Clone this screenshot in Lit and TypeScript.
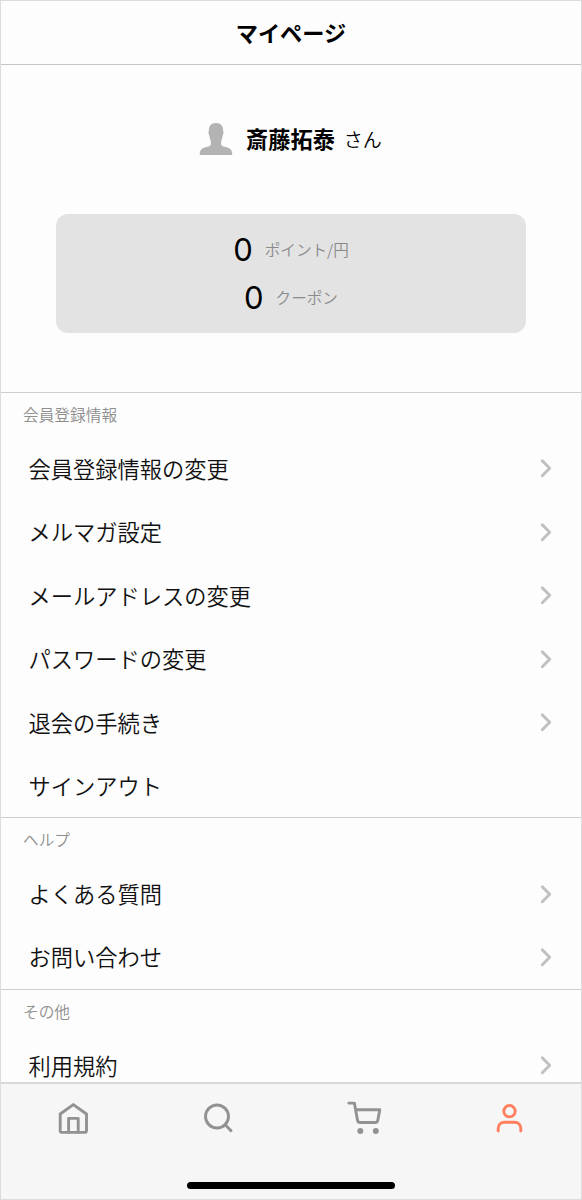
import { LitElement, html, css, svg } from "lit";
import { customElement, property } from "lit/decorators.js";

interface Section {
  title: string;
  items: { label: string; link: boolean }[];
}

const item = (label: string, link = true) => ({ label, link });

const SECTIONS: Section[] = [
  {
    title: "会員登録情報",
    items: [
      item("会員登録情報の変更"),
      item("メルマガ設定"),
      item("メールアドレスの変更"),
      item("パスワードの変更"),
      item("退会の手続き"),
      item("サインアウト", false),
    ],
  },
  { title: "ヘルプ", items: [item("よくある質問"), item("お問い合わせ")] },
  { title: "その他", items: [item("利用規約")] },
];

const ICONS: Record<string, unknown> = {
  home: svg`<path d="M6.200 14 19.300 4.600l13.200 9.400v16.400a2 2 0 0 1-2 2H8.200a2 2 0 0 1-2-2z"/><path d="M14.600 32.400V18.400h9.600v14"/>`,
  search: svg`<circle cx="18" cy="16.500" r="11.500"/><path d="m26.400 24.900 5.600 5.900"/>`,
  cart: svg`<path d="M4.800 3.100h5.600l3.100 17.200a2.600 2.600 0 0 0 2.600 2.200h15.200a2.600 2.600 0 0 0 2.500-2.200l2-10.600H11.700"/><g fill="currentColor" stroke="none"><circle cx="16.300" cy="31" r="3"/><circle cx="31.800" cy="31" r="3"/></g>`,
  user: svg`<circle cx="20.500" cy="11.200" r="5.700"/><path d="M9.200 31v-2.700a6 6 0 0 1 6-6h10.600a6 6 0 0 1 6 6V31"/>`,
};

@customElement("menu-section")
export class MenuSection extends LitElement {
  @property({ attribute: false }) section!: Section;

  static styles = css`
    :host {
      display: block;
      border-top: 1px solid #cfcfcf;
    }
    .title {
      height: 43.75px;
      line-height: 43.75px;
      padding-left: 22px;
      font-size: 15.7px;
      color: #8e8e8e;
    }
    .row {
      display: flex;
      align-items: center;
      justify-content: space-between;
      height: 63.4px;
      padding: 0 28px 0 27.5px;
      font-size: 22.25px;
      line-height: 24px;
      color: #111;
      white-space: nowrap;
    }
    .label {
      padding-bottom: 1px;
    }
    .chevron {
      width: 14px;
      height: 20px;
      fill: none;
      stroke: #c0c0c0;
      stroke-width: 2.9;
      stroke-linecap: round;
      stroke-linejoin: round;
    }
  `;

  render() {
    return html`
      <div class="title">${this.section.title}</div>
      ${this.section.items.map(
        (entry) => html`<div class="row">
          <span class="label">${entry.label}</span>
          ${entry.link
            ? html`<svg class="chevron" viewBox="0 0 14 20"><path d="m3.300 2.900 7.400 7.400-7.400 7.400" /></svg>`
            : null}
        </div>`
      )}
    `;
  }
}

@customElement("app-root")
export class AppRoot extends LitElement {
  static styles = css`
    :host {
      display: flex;
      flex-direction: column;
      box-sizing: border-box;
      width: 100%;
      height: 1200px;
      border: 1px solid #dcdcdc;
      background: #fdfdfd;
      font-family: "Noto Sans CJK JP", sans-serif;
      font-weight: 350;
      color: #000;
      overflow: hidden;
    }
    .header {
      flex: none;
      height: 63px;
      line-height: 62px;
      border-bottom: 1px solid #c6c6c6;
      text-align: center;
      font-size: 22.2px;
      font-weight: 700;
    }
    .content {
      flex: 1;
      min-height: 0;
      overflow: hidden;
    }
    .profile {
      display: flex;
      align-items: center;
      justify-content: center;
      height: 148.5px;
      white-space: nowrap;
    }
    .avatar {
      width: 34px;
      height: 34px;
      margin-right: 13px;
      fill: #b3b3b3;
    }
    .name {
      font-size: 22.2px;
      font-weight: 700;
      margin-right: 9px;
      padding-bottom: 3px;
    }
    .suffix {
      font-size: 19px;
      padding: 0 1px 2px 0;
    }
    .card {
      box-sizing: border-box;
      height: 119.5px;
      margin: 0 55px 59px;
      padding: 12px 0;
      border-radius: 12px;
      background: #e3e3e3;
    }
    .stat {
      display: flex;
      align-items: center;
      justify-content: center;
      height: 48px;
    }
    .value {
      font: 400 31px/48px Inter, sans-serif;
      margin-right: 12px;
    }
    .unit {
      font-size: 15.6px;
      padding-bottom: 1px;
      color: #8a8a8a;
    }
    .tabbar {
      flex: none;
      display: flex;
      flex-direction: column;
      justify-content: space-between;
      align-items: center;
      height: 115px;
      border-top: 2px solid #d8d8d8;
      background: #f6f6f6;
    }
    .tabs {
      display: flex;
      align-self: stretch;
      padding-top: 16px;
    }
    .tab {
      flex: 1;
      display: flex;
      justify-content: center;
      color: #929292;
    }
    .tab.active {
      color: #ff7f5f;
    }
    .icon {
      width: 40px;
      height: 40px;
      fill: none;
      stroke: currentColor;
      stroke-width: 2.9;
      stroke-linecap: round;
      stroke-linejoin: round;
    }
    .indicator {
      width: 208px;
      height: 7px;
      margin-bottom: 10px;
      border-radius: 4px;
      background: #000;
    }
  `;

  render() {
    return html`
      <div class="header">マイページ</div>
      <div class="content">
        <div class="profile">
          <svg class="avatar" viewBox="0 0 34 34">
            <path
              d="M17 1c5 0 7.400 3.200 7.100 8 .8.500.5 3.300-.4 4.300-.3 2.400-.8 4.200-1.500 5.500v3.600c.3 1.800 2.200 2.100 5.300 2.900 4.300 1.200 5.700 3 5.800 7.700H.7c.1-4.700 1.500-6.500 5.800-7.700 3.100-.8 5-1.100 5.300-2.900v-3.600c-.7-1.300-1.200-3.100-1.500-5.500-.9-1-1.200-3.800-.4-4.300C9.600 4.200 12 1 17 1z"
            />
          </svg>
          <span class="name">斎藤拓泰</span><span class="suffix">さん</span>
        </div>
        <div class="card">
          <div class="stat"><span class="value">0</span><span class="unit">ポイント/円</span></div>
          <div class="stat"><span class="value">0</span><span class="unit">クーポン</span></div>
        </div>
        ${SECTIONS.map((s) => html`<menu-section .section=${s}></menu-section>`)}
      </div>
      <div class="tabbar">
        <div class="tabs">
          ${Object.keys(ICONS).map(
            (name) => html`<div class="tab ${name === "user" ? "active" : ""}">
              <svg class="icon" viewBox="0 0 40 40">${ICONS[name]}</svg>
            </div>`
          )}
        </div>
        <div class="indicator"></div>
      </div>
    `;
  }
}
